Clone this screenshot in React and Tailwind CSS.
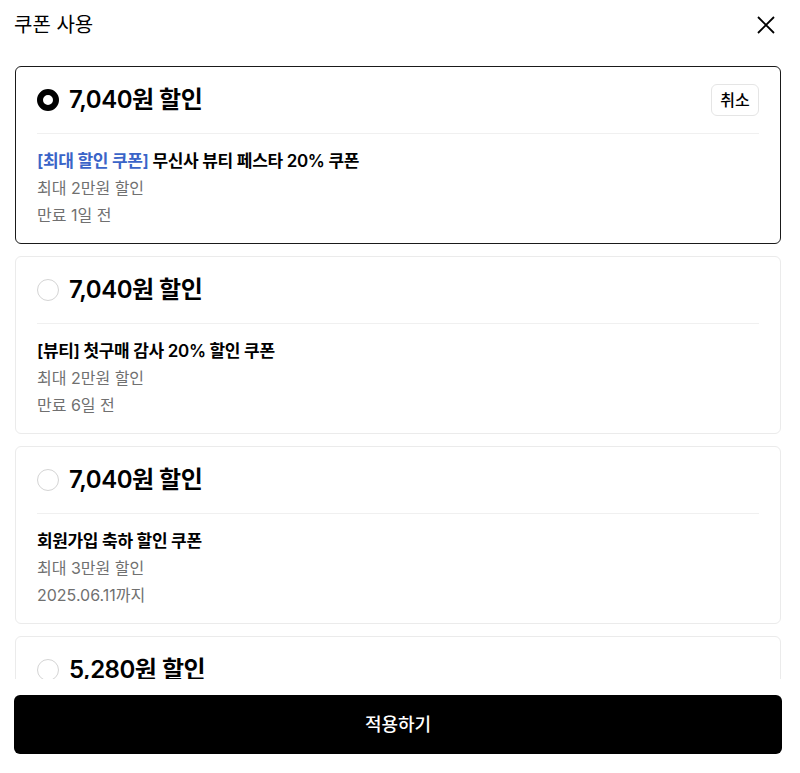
import React, { useState } from "react";

const coupons = [
  {
    id: 1,
    amount: "7,040원 할인",
    tag: "[최대 할인 쿠폰]",
    title: "무신사 뷰티 페스타 20% 쿠폰",
    limit: "최대 2만원 할인",
    expire: "만료 1일 전",
  },
  {
    id: 2,
    amount: "7,040원 할인",
    title: "[뷰티] 첫구매 감사 20% 할인 쿠폰",
    limit: "최대 2만원 할인",
    expire: "만료 6일 전",
  },
  {
    id: 3,
    amount: "7,040원 할인",
    title: "회원가입 축하 할인 쿠폰",
    limit: "최대 3만원 할인",
    expire: "2025.06.11까지",
  },
  {
    id: 4,
    amount: "5,280원 할인",
    title: "신규 회원 뷰티 쿠폰",
    limit: "최대 1만원 할인",
    expire: "만료 3일 전",
  },
];

const Radio = ({ checked }) =>
  checked ? (
    <span className="w-[22px] h-[22px] rounded-full border-[6px] border-black bg-white shrink-0" />
  ) : (
    <span className="w-[22px] h-[22px] rounded-full border border-[#d4d4d4] bg-white shrink-0" />
  );

const App = () => {
  const [selected, setSelected] = useState(1);

  return (
    <div
      className="w-[800px] h-[773px] bg-white text-black flex flex-col"
      style={{ fontFamily: 'Inter, "Noto Sans CJK KR", sans-serif' }}
    >
      <div className="h-[55px] flex items-center justify-between pl-[14px] pr-[24px] pb-[6px] shrink-0">
        <h1 className="text-[20px] font-normal">쿠폰 사용</h1>
        <button className="text-black">
          <svg width="20" height="20" viewBox="0 0 20 20" fill="none" stroke="currentColor" strokeWidth="1.8">
            <path d="M2 2L18 18M18 2L2 18" />
          </svg>
        </button>
      </div>

      <div className="h-[624px] overflow-hidden pl-[15px] pr-[19px] pt-[11px] flex flex-col gap-[12px] shrink-0">
        {coupons.map((c) => {
          const active = selected === c.id;
          return (
            <div
              key={c.id}
              onClick={() => setSelected(c.id)}
              className={`shrink-0 rounded-[6px] border px-[21px] pt-[17px] pb-[14px] ${
                active ? "border-[#1a1a1a]" : "border-[#ebebeb]"
              }`}
            >
              <div className="h-[32px] flex items-center justify-between">
                <div className="flex items-center gap-[10px]">
                  <Radio checked={active} />
                  <span className="text-[24px] font-semibold tracking-[-0.5px]">{c.amount}</span>
                </div>
                {active && (
                  <button className="h-[32px] w-[48px] rounded-[6px] border border-[#e5e5e5] text-[16px] font-medium">
                    취소
                  </button>
                )}
              </div>
              <div className="mt-[17px] border-t border-[#f0f0f0]" />
              <div className="pt-[14px] text-[16px] leading-[27px]">
                <p className="text-[17px] font-semibold tracking-[-0.35px]">
                  {c.tag && <span className="text-[#3a64c8]">{c.tag} </span>}
                  {c.title}
                </p>
                <p className="text-[#707070]">{c.limit}</p>
                <p className="text-[#707070]">{c.expire}</p>
              </div>
            </div>
          );
        })}
      </div>

      <div className="pl-[14px] pr-[18px] pt-[16px]">
        <button className="w-full h-[59px] rounded-[6px] bg-black text-white text-[18px] font-medium">
          적용하기
        </button>
      </div>
    </div>
  );
};

export default App;
